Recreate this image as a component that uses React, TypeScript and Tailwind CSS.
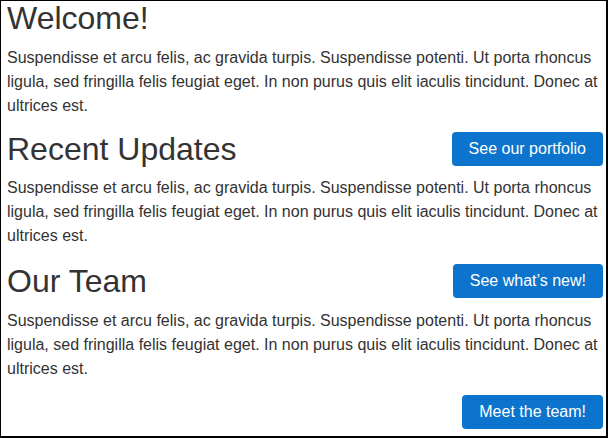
import React from "react";

const para =
  "Suspendisse et arcu felis, ac gravida turpis. Suspendisse potenti. Ut porta rhoncus ligula, sed fringilla felis feugiat eget. In non purus quis elit iaculis tincidunt. Donec at ultrices est.";

function Btn({ children }: { children: React.ReactNode }) {
  return (
    <button className="h-[34px] px-[17px] rounded-[4px] bg-[#0c74cc] text-white text-[16px] leading-[20px] whitespace-nowrap">
      {children}
    </button>
  );
}

export default function App() {
  return (
    <div
      className="w-[608px] h-[438px] bg-white border-black border-l border-t border-r-2 border-b-2 pl-[6px] pr-[3px] text-[#333333] flex flex-col"
      style={{ fontFamily: '"Liberation Sans", Arial, sans-serif' }}
    >
      <h2 className="text-[32px] leading-[35.2px] mb-[9.5px]">Welcome!</h2>
      <p className="text-[16px] leading-[24px] mb-[14px]">{para}</p>

      <div className="flex items-start justify-between mb-[9.5px]">
        <h2 className="text-[32px] leading-[35.2px]">Recent Updates</h2>
        <div className="mt-[0.5px]">
          <Btn>See our portfolio</Btn>
        </div>
      </div>
      <p className="text-[16px] leading-[24px] mb-[16px]">{para}</p>

      <div className="flex items-start justify-between mb-[9.5px]">
        <h2 className="text-[32px] leading-[35.2px]">Our Team</h2>
        <div>
          <Btn>See what’s new!</Btn>
        </div>
      </div>
      <p className="text-[16px] leading-[24px] mb-[14px]">{para}</p>

      <div className="flex justify-end">
        <Btn>Meet the team!</Btn>
      </div>
    </div>
  );
}
